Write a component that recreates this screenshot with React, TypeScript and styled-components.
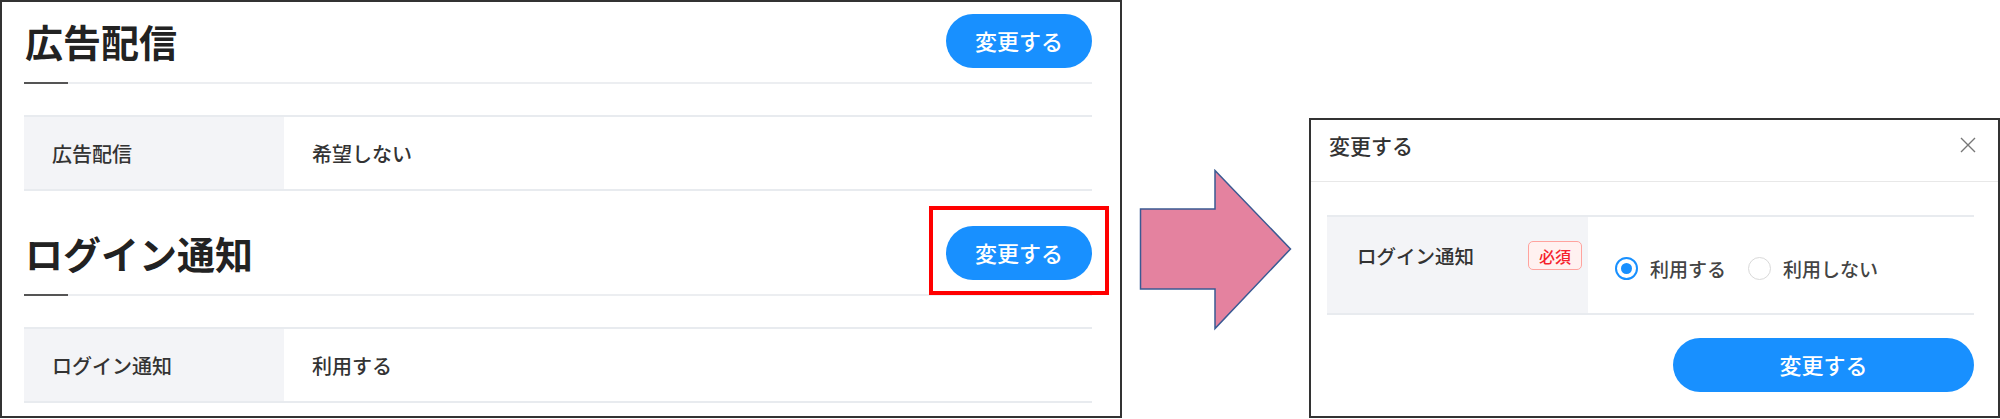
import React from 'react'
import styled, { createGlobalStyle, css } from 'styled-components'

const FONT = `"Noto Sans CJK JP", "Noto Sans", sans-serif`
const BLUE = '#1890ff'
const LINE = '#e8ebef'
const CELL = '#f3f4f7'

const GlobalStyle = createGlobalStyle`
  *, *:before, *:after { box-sizing: border-box; }
  html, body { margin: 0; padding: 0; background: #ffffff; }
  body { font-family: ${FONT}; color: #333333; }
`

const Stage = styled.div`
  width: 2000px;
  height: 419px;
  display: flex;
  align-items: flex-start;
`

const Panel = styled.div`
  width: 1122px;
  height: 418px;
  flex: none;
  border: 2px solid #333333;
  padding: 10px 28px 0 22px;
  display: flex;
  flex-direction: column;
  gap: 33px;
`

const Section = styled.section`
  display: flex;
  flex-direction: column;
`

const SectionHead = styled.div`
  height: 58px;
  display: flex;
  align-items: center;
  justify-content: space-between;
`

const Title = styled.h2`
  margin: 0 0 0 1px;
  font-size: 38px;
  font-weight: 700;
  line-height: 1;
  color: #222222;
`

const Divider = styled.div`
  margin-top: 12px;
  height: 2px;
  display: flex;
  &:before {
    content: '';
    width: 44px;
    background: #555555;
  }
  &:after {
    content: '';
    flex: 1;
    background: #eceef1;
  }
`

const Row = styled.div<{ $height: number }>`
  display: flex;
  height: ${({ $height }) => $height}px;
  border-top: 2px solid ${LINE};
  border-bottom: 2px solid ${LINE};
`

const TableRow = styled(Row)`
  margin-top: 31px;
`

const LabelCell = styled.div<{ $width: number }>`
  width: ${({ $width }) => $width}px;
  flex: none;
  background: ${CELL};
  padding-left: 28px;
  display: flex;
  align-items: center;
  font-size: 20px;
  font-weight: 500;
  color: #333333;
`

const ValueCell = styled.div`
  flex: 1;
  padding-left: 28px;
  display: flex;
  align-items: center;
  font-size: 20px;
  font-weight: 500;
  color: #333333;
`

const PillButton = styled.button<{ $wide?: boolean }>`
  height: 54px;
  width: ${({ $wide }) => ($wide ? 301 : 146)}px;
  border: 0;
  border-radius: 27px;
  background: ${BLUE};
  color: #ffffff;
  font-family: ${FONT};
  font-size: 22px;
  font-weight: 500;
  cursor: pointer;
  padding: 0 0 2px;
`

const Highlight = styled.div<{ $on?: boolean }>`
  position: relative;
  display: flex;
  ${({ $on }) =>
    $on &&
    css`
      &:after {
        content: '';
        position: absolute;
        top: -20px;
        bottom: -15px;
        left: -17px;
        right: -17px;
        border: 4px solid #ff0000;
        pointer-events: none;
      }
    `}
`

const ArrowColumn = styled.div`
  width: 187px;
  flex: none;
  padding: 169px 0 0 17px;
`

const Dialog = styled.div`
  margin-top: 118px;
  width: 691px;
  height: 300px;
  border: 2px solid #333333;
  display: flex;
  flex-direction: column;
`

const DialogHead = styled.div`
  height: 62px;
  padding: 0 22px 11px 18px;
  border-bottom: 1px solid #e8e8e8;
  display: flex;
  align-items: center;
  justify-content: space-between;
`

const DialogTitle = styled.div`
  font-size: 21px;
  font-weight: 500;
  color: #333333;
`

const CloseButton = styled.button`
  width: 16px;
  height: 16px;
  padding: 0;
  border: 0;
  background: none;
  display: flex;
  cursor: pointer;
`

const DialogBody = styled.div`
  padding: 33px 24px 0 16px;
  display: flex;
  flex-direction: column;
`

const FormLabel = styled(LabelCell)`
  padding: 24px 6px 0 30px;
  align-items: flex-start;
  justify-content: space-between;
  font-size: 19.5px;
`

const Badge = styled.span`
  height: 29px;
  width: 54px;
  border: 1.5px solid #ffa39e;
  border-radius: 5px;
  background: #fff1f0;
  color: #f5222d;
  font-size: 16px;
  font-weight: 500;
  display: flex;
  align-items: center;
  justify-content: center;
`

const RadioGroup = styled.div`
  flex: 1;
  padding: 6px 0 0 27px;
  display: flex;
  align-items: center;
  gap: 22px;
`

const RadioOption = styled.label`
  display: flex;
  align-items: center;
  gap: 12px;
  font-size: 19px;
  font-weight: 500;
  color: #444444;
  cursor: pointer;
`

const RadioMark = styled.span<{ $checked?: boolean }>`
  width: 23px;
  height: 23px;
  border-radius: 50%;
  border: ${({ $checked }) => ($checked ? `2px solid ${BLUE}` : '1.5px solid #d9d9d9')};
  background: #ffffff;
  display: flex;
  align-items: center;
  justify-content: center;
  &:after {
    content: '';
    width: 11px;
    height: 11px;
    border-radius: 50%;
    background: ${({ $checked }) => ($checked ? BLUE : 'transparent')};
  }
`

const DialogFooter = styled.div`
  margin-top: 23px;
  display: flex;
  justify-content: flex-end;
`

const settings = [
  { title: '広告配信', value: '希望しない', marked: false },
  { title: 'ログイン通知', value: '利用する', marked: true },
]

function Arrow() {
  return (
    <svg width="154" height="162" viewBox="0 0 154 162">
      <polygon
        points="1.5,40 76,40 76,1.5 151.5,80 76,159.5 76,120 1.5,120"
        fill="#e4829f"
        stroke="#3a5a93"
        strokeWidth="1.5"
      />
    </svg>
  )
}

export default function App() {
  return (
    <>
      <GlobalStyle />
      <Stage>
        <Panel>
          {settings.map(item => (
            <Section key={item.title}>
              <SectionHead>
                <Title>{item.title}</Title>
                <Highlight $on={item.marked}>
                  <PillButton>変更する</PillButton>
                </Highlight>
              </SectionHead>
              <Divider />
              <TableRow $height={76}>
                <LabelCell $width={260}>{item.title}</LabelCell>
                <ValueCell>{item.value}</ValueCell>
              </TableRow>
            </Section>
          ))}
        </Panel>

        <ArrowColumn>
          <Arrow />
        </ArrowColumn>

        <Dialog>
          <DialogHead>
            <DialogTitle>変更する</DialogTitle>
            <CloseButton aria-label="閉じる">
              <svg width="16" height="16" viewBox="0 0 16 16">
                <path d="M1 1L15 15M15 1L1 15" stroke="#777777" strokeWidth="1.4" />
              </svg>
            </CloseButton>
          </DialogHead>
          <DialogBody>
            <Row $height={100}>
              <FormLabel $width={261}>
                <span>ログイン通知</span>
                <Badge>必須</Badge>
              </FormLabel>
              <RadioGroup>
                <RadioOption>
                  <RadioMark $checked />
                  利用する
                </RadioOption>
                <RadioOption>
                  <RadioMark />
                  利用しない
                </RadioOption>
              </RadioGroup>
            </Row>
            <DialogFooter>
              <PillButton $wide>変更する</PillButton>
            </DialogFooter>
          </DialogBody>
        </Dialog>
      </Stage>
    </>
  )
}
